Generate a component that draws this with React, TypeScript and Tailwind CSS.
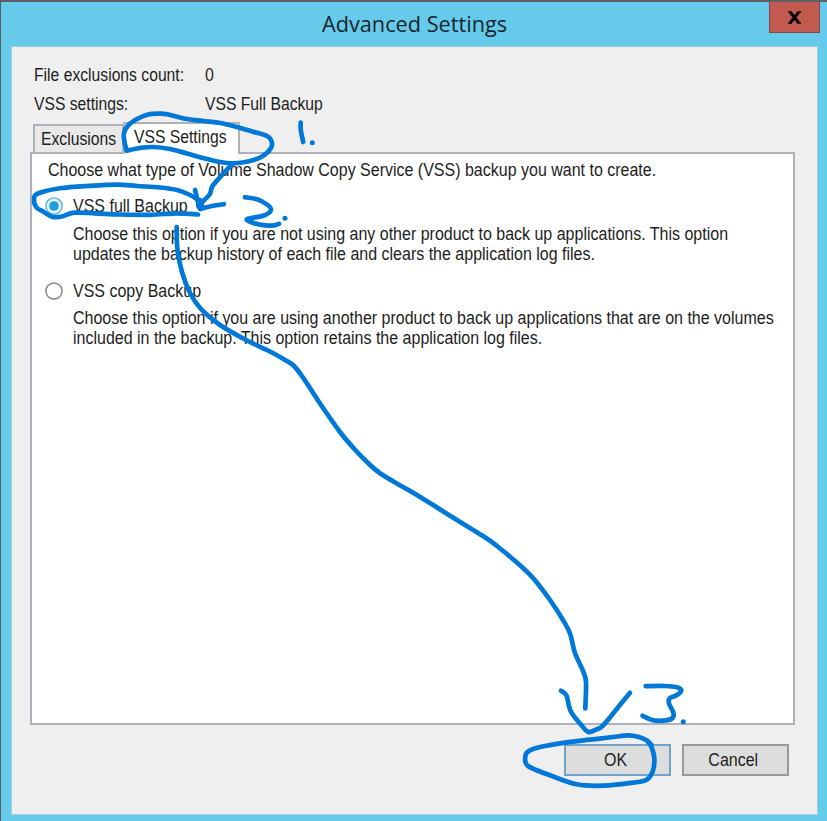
import type { ReactNode } from 'react';

type Point = [number, number];

// Smooth curve through a list of pen positions.
function smooth(points: Point[]): string {
  let d = `M${points[0][0]} ${points[0][1]}`;
  for (let i = 0; i < points.length - 1; i++) {
    const a = points[Math.max(i - 1, 0)];
    const b = points[i];
    const c = points[i + 1];
    const e = points[Math.min(i + 2, points.length - 1)];
    d += ` C${b[0] + (c[0] - a[0]) / 6} ${b[1] + (c[1] - a[1]) / 6} ${c[0] - (e[0] - b[0]) / 6} ${c[1] - (e[1] - b[1]) / 6} ${c[0]} ${c[1]}`;
  }
  return d;
}

const strokes: Point[][] = [
  // loop round the active tab
  [[126.7, 150.7], [124.5, 142], [124, 133], [128.5, 125], [138, 118.5], [148, 114.5], [158, 113.7], [167, 114.2], [187, 119], [203, 121], [220, 123], [237, 127], [253, 131.7], [267, 136], [271.5, 141], [271, 148], [262, 156.5], [248, 161.5], [233, 163.3], [220, 162], [203, 158], [187, 153.5], [170, 149], [153, 147], [140, 148], [126.7, 150.7]],
  // first arrow
  [[233, 163.5], [222, 175], [212.5, 186], [209.5, 194.5], [200, 204]],
  [[195, 190], [197, 198], [199, 206]],
  [[224, 204.2], [212, 206], [200, 209]],
  // loop round the first option
  [[198, 214.5], [177, 213.3], [150, 214.8], [120, 214.5], [95, 213.3], [74, 212.7], [62, 216.5], [52, 216.7], [43, 211.5], [36.5, 207.5], [34, 199], [38, 193.5], [60, 188.3], [90, 185.8], [117, 184.6], [137, 186], [160, 187.5], [177, 190], [190, 195], [200, 201]],
  // 1, 2, 3
  [[300.7, 122.7], [300.8, 130], [303.2, 142]],
  [[245, 197.2], [257, 199.3], [267, 204.5], [271, 210], [264, 215.5], [247, 219.2], [255, 223.5], [265, 225.3], [274, 225.3], [279, 223.8]],
  [[645.7, 686.2], [665, 686], [677, 687.3], [681.3, 690.5], [677, 695], [669.5, 698.5], [669, 703.5], [673.5, 713], [672, 718.5], [663, 720.7], [652, 720], [642.5, 715.8]],
  // long arrow
  [[176.7, 227], [177.3, 248], [182, 272], [190, 293], [201, 309], [220, 325], [247, 340.5], [270, 351.5], [286, 360.5], [293.5, 365.5], [303, 377.5], [320, 403.5], [340, 432], [353, 447.5], [367, 462], [380, 473.3], [403, 487], [417, 495], [450, 515.7], [483, 536], [497, 546], [522, 567], [533.5, 578.5], [550, 600], [563, 620], [570, 633.5], [575, 653], [583, 671], [586, 682], [585.3, 708.5]],
  [[561, 690.7], [566.3, 695], [569, 706], [572, 713.5], [581.7, 725.5], [588.3, 732], [596, 729.7], [603, 725.5], [616.7, 709], [630, 692.7]],
  // loop round the OK button
  [[651.5, 745], [647, 740.5], [638, 736.8], [628, 735.3], [613, 737], [590, 739.7], [566.7, 742.3], [540, 747], [528.5, 751.3], [525.3, 756.7], [528, 766], [550, 775.3], [576.7, 784.3], [603, 785.7], [633, 782.7], [647, 779.5], [653, 770.5], [654.3, 758], [651.5, 747], [647, 740.5]],
];

const dots: Point[] = [[312.3, 142.7], [285, 218.3], [683.3, 721.7]];

function Ink() {
  return (
    <svg width="827" height="821" viewBox="0 0 827 821" fill="none">
      <g stroke="#0078d7" strokeWidth="4.7" strokeLinecap="round" strokeLinejoin="round">
        {strokes.map((s, i) => (
          <path key={i} d={smooth(s)} />
        ))}
        <path d="M200 202v3.5" strokeWidth="8" />
      </g>
      {dots.map(([x, y]) => (
        <circle key={x} cx={x} cy={y} r="2.5" fill="#0078d7" />
      ))}
    </svg>
  );
}

function Label({ children }: { children: ReactNode }) {
  return (
    <span className="block w-max origin-left scale-x-[0.914] whitespace-nowrap text-[17.5px] leading-5">
      {children}
    </span>
  );
}

function ShortLabel({ children }: { children: ReactNode }) {
  return (
    <span className="block w-max origin-left scale-x-[0.897] whitespace-nowrap text-[17.5px] leading-5">
      {children}
    </span>
  );
}

function Radio({ checked }: { checked?: boolean }) {
  return checked ? (
    <svg width="18" height="18" viewBox="0 0 18 18">
      <circle cx="9" cy="9" r="8.1" fill="#e4f4fb" stroke="#4fb5e0" strokeWidth="1.4" />
      <circle cx="9" cy="9" r="4.8" fill="#1f9fd8" />
    </svg>
  ) : (
    <svg width="18" height="18" viewBox="0 0 18 18">
      <circle cx="9" cy="9" r="8.1" fill="#ffffff" stroke="#858585" strokeWidth="1.5" />
    </svg>
  );
}

function PushButton({ label, primary }: { label: string; primary?: boolean }) {
  return (
    <button
      className={
        primary
          ? 'flex h-8 w-[107px] items-center justify-center border-2 border-[#6fa3c8] bg-[#dddddd] pr-1'
          : 'flex h-8 w-[107px] items-center justify-center border-2 border-[#9a9a9a] bg-[#dddddd] pr-1'
      }
    >
      <span className="text-[17.5px] leading-5 scale-x-[0.914]">{label}</span>
    </button>
  );
}

export default function App() {
  return (
    <div className="relative flex h-[821px] w-[827px] flex-col overflow-hidden border-l border-t-2 border-[#5c5f63] bg-[#66caea] font-['Liberation_Sans',Arial,sans-serif] text-[#1d1d22]">
      <header className="flex h-[44px] items-start">
        <div className="w-[768px] pl-[321px] pt-[7px]">
          <h1 className="w-max whitespace-nowrap font-['Open_Sans',sans-serif] text-[21.7px] leading-[30px] text-[#16262e]">
            Advanced Settings
          </h1>
        </div>
        <button className="-mt-px flex h-[32px] w-[51px] items-center justify-center border border-[#7c4a4c] bg-[#c25a50]">
          <svg width="15" height="13" viewBox="0 0 15 13" stroke="#0a0404" fill="none">
            <path d="M3.5 1.5L11.5 11.5M11.5 1.5L3.5 11.5" strokeWidth="3" />
            <path d="M1 1h4M10 1h4M1 12h4M10 12h4" strokeWidth="1.4" />
          </svg>
        </button>
      </header>

      <main className="ml-[10px] mr-[9px] flex h-[769px] flex-col border border-[#a5cfe0] bg-[#efefef]">
        <dl className="grid grid-cols-[171px_1fr] gap-y-[9px] pl-[22px] pt-[18px]">
          <dt><ShortLabel>File exclusions count:</ShortLabel></dt>
          <dd><Label>0</Label></dd>
          <dt><ShortLabel>VSS settings:</ShortLabel></dt>
          <dd><ShortLabel>VSS Full Backup</ShortLabel></dd>
        </dl>

        <div className="z-10 -mb-[2px] ml-[21px] mt-2 flex h-8 items-end">
          <div className="mb-[2px] h-[28px] w-[91px] border-2 border-b-0 border-[#b0b0b8] bg-[#e9e9e9] pl-[6px] pt-[3px]">
            <ShortLabel>Exclusions</ShortLabel>
          </div>
          <div className="-ml-px h-8 w-[117px] border-2 border-b-0 border-[#b0b0b8] bg-white pl-[9px] pt-[3px]">
            <ShortLabel>VSS Settings</ShortLabel>
          </div>
        </div>

        <section className="ml-[18px] h-[573px] w-[765px] border-2 border-[#b0b0b8] bg-white">
          <div className="pl-[16px] pt-[6px]"><Label>Choose what type of Volume Shadow Copy Service (VSS) backup you want to create.</Label></div>

          <div className="mt-[16px] flex items-center gap-[10px] pl-[13px]">
            <Radio checked />
            <Label>VSS full Backup</Label>
          </div>
          <div className="mt-2 pl-[41px]">
            <Label>Choose this option if you are not using any other product to back up applications. This option</Label>
            <Label>updates the backup history of each file and clears the application log files.</Label>
          </div>

          <div className="mt-[17px] flex items-center gap-[10px] pl-[13px]">
            <Radio />
            <Label>VSS copy Backup</Label>
          </div>
          <div className="mt-[7px] pl-[41px]">
            <Label>Choose this option if you are using another product to back up applications that are on the volumes</Label>
            <Label>included in the backup. This option retains the application log files.</Label>
          </div>
        </section>

        <footer className="mr-[28px] mt-[19px] flex justify-end gap-[11px]">
          <PushButton label="OK" primary />
          <PushButton label="Cancel" />
        </footer>
      </main>
      <div className="pointer-events-none absolute -left-px -top-0.5 z-20">
        <Ink />
      </div>
    </div>
  );
}
